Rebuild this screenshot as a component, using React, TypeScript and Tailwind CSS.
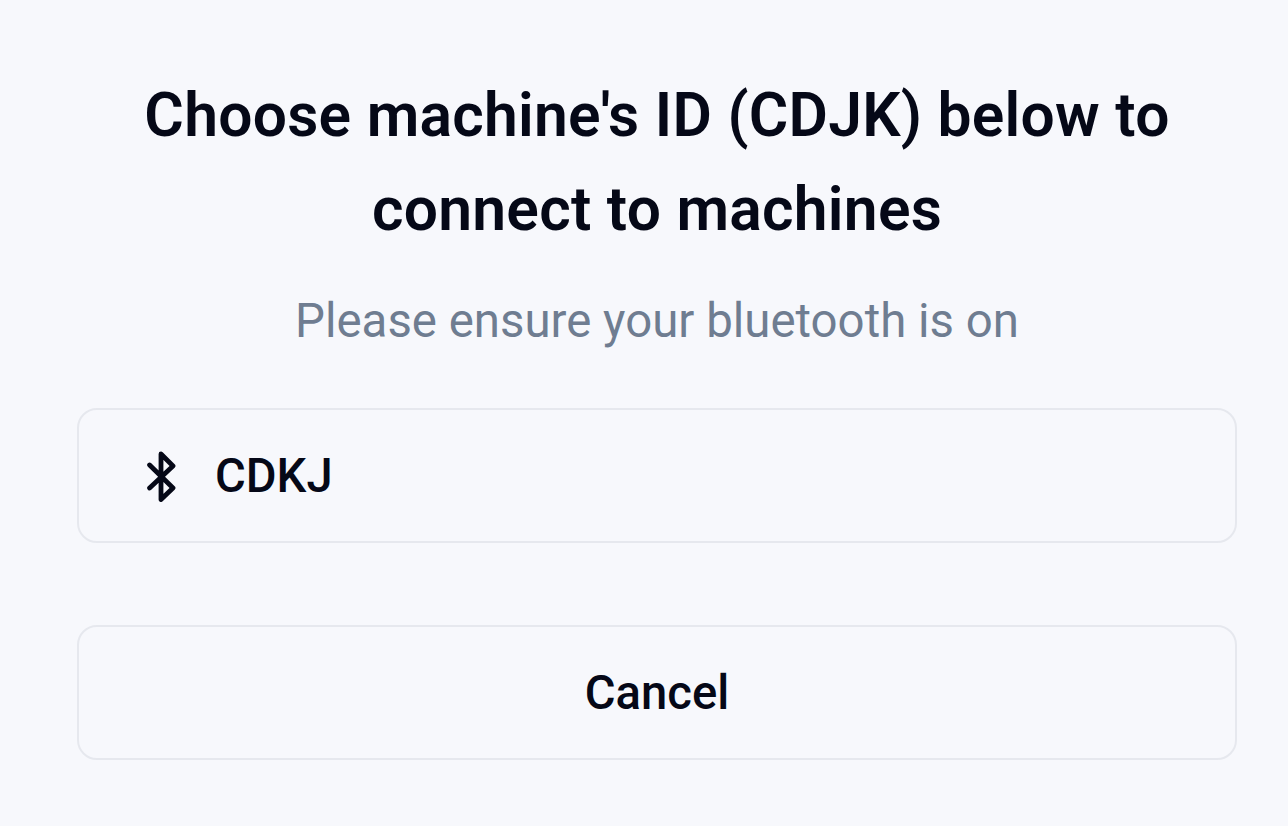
export default function App() {
  return (
    <main className="flex h-[826px] w-full flex-col bg-[#f7f8fc] pl-[77px] pr-[51px] pt-[69px] font-['Roboto',sans-serif] text-[#050817]">
      <h1 className="text-center text-[60.5px] font-semibold leading-[94px] tracking-[0.26px]">
        Choose machine's ID (CDJK) below to<br />connect to machines
      </h1>
      <p className="mt-[34px] text-center text-[47.4px] leading-[60px] text-[#6f7d91]">Please ensure your bluetooth is on</p>
      <button className="mt-[57px] flex h-[135px] w-full items-center rounded-[20px] border-2 border-[#e6e8ee] pl-[66px]">
        <svg viewBox="0 0 32 52" className="h-[52px] w-8" fill="none" stroke="currentColor" strokeWidth="4.8" strokeLinecap="round" strokeLinejoin="round">
          <path d="M4.6 15L28 38L16 49.5V4L28 16L4.6 38" />
        </svg>
        <span className="ml-[38px] pt-[2px] text-[47.2px] font-medium">CDKJ</span>
      </button>
      <button className="mt-[82px] flex h-[135px] w-full items-center justify-center rounded-[20px] border-2 border-[#e6e8ee] pt-[2px] text-[47.2px] font-medium">Cancel</button>
    </main>
  );
}
